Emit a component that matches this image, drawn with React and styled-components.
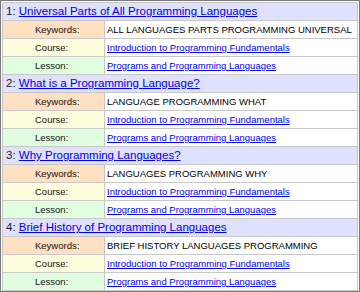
import React from "react";
import styled, { createGlobalStyle } from "styled-components";

const GlobalStyle = createGlobalStyle`
  body {
    margin: 0;
    background: #ffffff;
  }
`;

const topics = [
  {
    title: "Universal Parts of All Programming Languages",
    keywords: "ALL LANGUAGES PARTS PROGRAMMING UNIVERSAL",
  },
  {
    title: "What is a Programming Language?",
    keywords: "LANGUAGE PROGRAMMING WHAT",
  },
  {
    title: "Why Programming Languages?",
    keywords: "LANGUAGES PROGRAMMING WHY",
  },
  {
    title: "Brief History of Programming Languages",
    keywords: "BRIEF HISTORY LANGUAGES PROGRAMMING",
  },
];

const labelColors = {
  keywords: "#ffe0c0",
  course: "#ffffe0",
  lesson: "#e0ffe0",
};

const App = () => {
  return (
    <>
      <GlobalStyle />
      <Frame>
        <Table>
          {topics.map((t, i) => (
            <React.Fragment key={i}>
              <Header>
                {i + 1}: <HeaderLink href="#">{t.title}</HeaderLink>
              </Header>
              <Label $kind="keywords">Keywords:</Label>
              <Value>{t.keywords}</Value>
              <Label $kind="course">Course:</Label>
              <Value>
                <SmallLink href="#">Introduction to Programming Fundamentals</SmallLink>
              </Value>
              <Label $kind="lesson">Lesson:</Label>
              <Value>
                <SmallLink href="#">Programs and Programming Languages</SmallLink>
              </Value>
            </React.Fragment>
          ))}
        </Table>
      </Frame>
    </>
  );
};

export default App;

const Frame = styled.div`
  width: 360px;
  height: 292px;
  box-sizing: border-box;
  border: 1px solid #7a7a7a;
  background: #ffffff;
  padding: 1px;
  font-family: "Liberation Sans", Arial, sans-serif;
`;

const Table = styled.div`
  display: grid;
  grid-template-columns: 101px 1fr;
  grid-auto-rows: 17px;
  gap: 1px;
  background: #c8c8c8;
  border: 1px solid #c8c8c8;
`;

const Header = styled.div`
  grid-column: 1 / span 2;
  background: #e0e0ff;
  color: #222222;
  font-size: 11.5px;
  line-height: 17px;
  padding-left: 3px;
  white-space: nowrap;
`;

const HeaderLink = styled.a`
  color: #0000ee;
  text-decoration: underline;
`;

const Label = styled.div`
  background: ${(p) => labelColors[p.$kind]};
  color: #111111;
  font-size: 9.5px;
  line-height: 17px;
  padding-left: 32px;
`;

const Value = styled.div`
  background: #ffffff;
  color: #000000;
  font-size: 9.5px;
  line-height: 17px;
  padding-left: 2px;
  white-space: nowrap;
`;

const SmallLink = styled.a`
  color: #0000ee;
  text-decoration: underline;
`;
